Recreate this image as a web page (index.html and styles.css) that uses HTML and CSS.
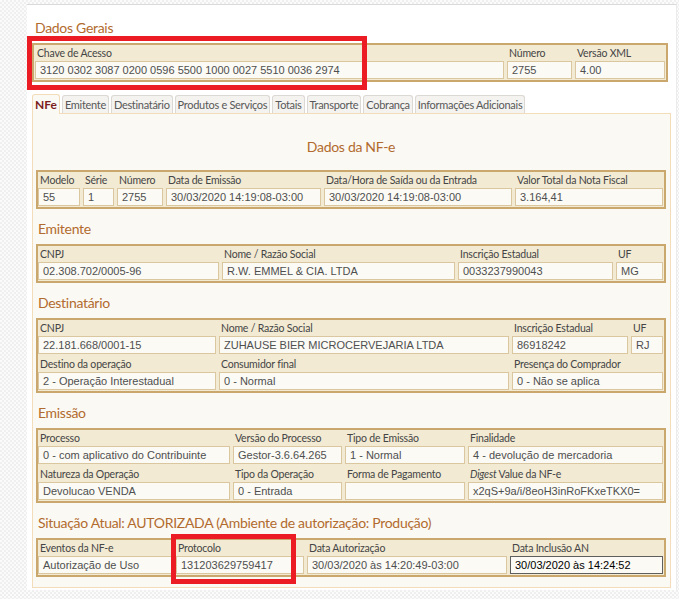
FILE: index.html
```html
<!DOCTYPE html>
<html lang="pt-BR">
<head>
<meta charset="utf-8">
<title>Dados Gerais NF-e</title>
<link rel="stylesheet" href="styles.css">
</head>
<body>
<div class="page">
  <h2 class="title top">Dados Gerais</h2>
  <div class="box g-geral">
    <div class="cell"><div class="lbl">Chave de Acesso</div><div class="fld">3120 0302 3087 0200 0596 5500 1000 0027 5510 0036 2974</div></div>
    <div class="cell"><div class="lbl">Número</div><div class="fld">2755</div></div>
    <div class="cell"><div class="lbl">Versão XML</div><div class="fld">4.00</div></div>
  </div>

  <div class="tabs">
    <div class="tab active">NFe</div>
    <div class="tab">Emitente</div>
    <div class="tab">Destinatário</div>
    <div class="tab">Produtos e Serviços</div>
    <div class="tab">Totais</div>
    <div class="tab">Transporte</div>
    <div class="tab">Cobrança</div>
    <div class="tab">Informações Adicionais</div>
  </div>

  <div class="panel">
    <h2 class="title center">Dados da NF-e</h2>
    <div class="box g-nfe">
      <div class="cell"><div class="lbl">Modelo</div><div class="fld">55</div></div>
      <div class="cell"><div class="lbl">Série</div><div class="fld">1</div></div>
      <div class="cell"><div class="lbl">Número</div><div class="fld">2755</div></div>
      <div class="cell"><div class="lbl">Data de Emissão</div><div class="fld">30/03/2020 14:19:08-03:00</div></div>
      <div class="cell"><div class="lbl">Data/Hora de Saída ou da Entrada</div><div class="fld">30/03/2020 14:19:08-03:00</div></div>
      <div class="cell"><div class="lbl">Valor Total da Nota Fiscal</div><div class="fld">3.164,41</div></div>
    </div>

    <h2 class="title sub">Emitente</h2>
    <div class="box g-emit">
      <div class="cell"><div class="lbl">CNPJ</div><div class="fld">02.308.702/0005-96</div></div>
      <div class="cell"><div class="lbl">Nome / Razão Social</div><div class="fld">R.W. EMMEL &amp; CIA. LTDA</div></div>
      <div class="cell"><div class="lbl">Inscrição Estadual</div><div class="fld">0033237990043</div></div>
      <div class="cell"><div class="lbl">UF</div><div class="fld">MG</div></div>
    </div>

    <h2 class="title sub">Destinatário</h2>
    <div class="box g-dest">
      <div class="cell"><div class="lbl">CNPJ</div><div class="fld">22.181.668/0001-15</div></div>
      <div class="cell"><div class="lbl">Nome / Razão Social</div><div class="fld">ZUHAUSE BIER MICROCERVEJARIA LTDA</div></div>
      <div class="cell"><div class="lbl">Inscrição Estadual</div><div class="fld">86918242</div></div>
      <div class="cell"><div class="lbl">UF</div><div class="fld">RJ</div></div>
      <div class="cell"><div class="lbl">Destino da operação</div><div class="fld">2 - Operação Interestadual</div></div>
      <div class="cell"><div class="lbl">Consumidor final</div><div class="fld">0 - Normal</div></div>
      <div class="cell span2"><div class="lbl">Presença do Comprador</div><div class="fld">0 - Não se aplica</div></div>
    </div>

    <h2 class="title sub">Emissão</h2>
    <div class="box g-emis">
      <div class="cell"><div class="lbl">Processo</div><div class="fld">0 - com aplicativo do Contribuinte</div></div>
      <div class="cell"><div class="lbl">Versão do Processo</div><div class="fld">Gestor-3.6.64.265</div></div>
      <div class="cell"><div class="lbl">Tipo de Emissão</div><div class="fld">1 - Normal</div></div>
      <div class="cell"><div class="lbl">Finalidade</div><div class="fld">4 - devolução de mercadoria</div></div>
      <div class="cell"><div class="lbl">Natureza da Operação</div><div class="fld">Devolucao VENDA</div></div>
      <div class="cell"><div class="lbl">Tipo da Operação</div><div class="fld">0 - Entrada</div></div>
      <div class="cell"><div class="lbl">Forma de Pagamento</div><div class="fld"></div></div>
      <div class="cell"><div class="lbl"><i>Digest</i> Value da NF-e</div><div class="fld">x2qS+9a/i/8eoH3inRoFKxeTKX0=</div></div>
    </div>

    <h2 class="title sub">Situação Atual: AUTORIZADA (Ambiente de autorização: Produção)</h2>
    <div class="box g-sit">
      <div class="cell"><div class="lbl">Eventos da NF-e</div><div class="fld">Autorização de Uso</div></div>
      <div class="cell"><div class="lbl">Protocolo</div><div class="fld">131203629759417</div></div>
      <div class="cell"><div class="lbl">Data Autorização</div><div class="fld">30/03/2020 às 14:20:49-03:00</div></div>
      <div class="cell"><div class="lbl">Data Inclusão AN</div><div class="fld focus">30/03/2020 às 14:24:52</div></div>
    </div>
  </div>
</div>
<div class="mark mark1"></div>
<div class="mark mark2"></div>
</body>
</html>
```
FILE: styles.css
```css
body {
  margin: 0;
  background: repeating-conic-gradient(#efefef 0 25%, #fbfbfb 0 50%) 0 0 / 4px 4px;
  font-family: Lato, "Liberation Sans", sans-serif;
  position: relative;
  min-height: 599px;
}

.page {
  margin: 4px 0 0 27px;
  width: 639px;
  padding: 14px 5px 2px 5px;
  background: #fff;
  border-top: 1px solid #dadada;
  border-right: 1px solid #ebebeb;
}

.title {
  margin: 0 0 6px 3px;
  font-family: Lato, sans-serif;
  font-size: 14px;
  letter-spacing: -0.3px;
  line-height: 18px;
  font-weight: normal;
  color: #b26b2e;
  white-space: nowrap;
}

.title.center {
  text-align: center;
  margin: 0 0 14px 0;
}

.title.sub {
  margin: 11px 0 6px 2px;
}

.box {
  display: grid;
  column-gap: 3px;
  row-gap: 2px;
  background: #f2ead3;
  border: 2px solid #caa86d;
  padding: 0 1px 1px 0;
}

.g-geral {
  margin-right: 3px;
  padding-left: 1px;
  grid-template-columns: 469px 65px 1fr;
}

.g-nfe { grid-template-columns: 42px 31px 46px 155px 188px 1fr; }
.g-emit { grid-template-columns: 181px 233px 155px 1fr; }
.g-dest { grid-template-columns: 178px 290px 116px 1fr; }
.g-emis { grid-template-columns: 192px 109px 120px 1fr; }
.g-sit { grid-template-columns: 135px 128px 200px 1fr; }

.span2 { grid-column: span 2; }

.cell {
  min-width: 0;
}

.lbl {
  height: 16px;
  line-height: 16px;
  padding-left: 2px;
  font-family: Lato, sans-serif;
  font-size: 10.5px;
  letter-spacing: -0.2px;
  color: #454545;
  white-space: nowrap;
  overflow: hidden;
}

.fld {
  height: 16px;
  line-height: 16px;
  border: 1px solid #dac69f;
  background: #fbfaf5;
  padding-left: 4px;
  font-family: "Liberation Sans", Arial, sans-serif;
  font-size: 11px;
  color: #4f4f4f;
  white-space: nowrap;
  overflow: hidden;
}

.fld.focus {
  border-color: #5e5e5e;
  color: #000;
}

.tabs {
  display: flex;
  align-items: flex-end;
  gap: 2px;
  margin-top: 12px;
  margin-bottom: -1px;
  position: relative;
  z-index: 1;
}

.tab {
  height: 17px;
  line-height: 17px;
  padding: 0 2px;
  margin-bottom: 1px;
  background: #f4f3f0;
  border: 1px solid #dcd9d4;
  border-bottom: none;
  border-radius: 3px 3px 0 0;
  font-family: Lato, sans-serif;
  font-size: 11px;
  letter-spacing: -0.3px;
  color: #585858;
  white-space: nowrap;
}

.tab.active {
  height: 19px;
  line-height: 20px;
  margin-bottom: 0;
  background: #fbf9f4;
  border-color: #f2dcb9;
  font-weight: bold;
  font-size: 12px;
  letter-spacing: 0;
  color: #7a1c1c;
  padding: 0 2px;
}

.panel {
  background: #fbf9f4;
  border: 1px solid #f2dcb9;
  padding: 24px 4px 10px 3px;
}

.mark {
  position: absolute;
  border: 5px solid #ec1c24;
  box-sizing: border-box;
}

.mark1 {
  left: 27px;
  top: 36px;
  width: 340px;
  height: 54px;
}

.mark2 {
  left: 171px;
  top: 534px;
  width: 125px;
  height: 50px;
}
```
